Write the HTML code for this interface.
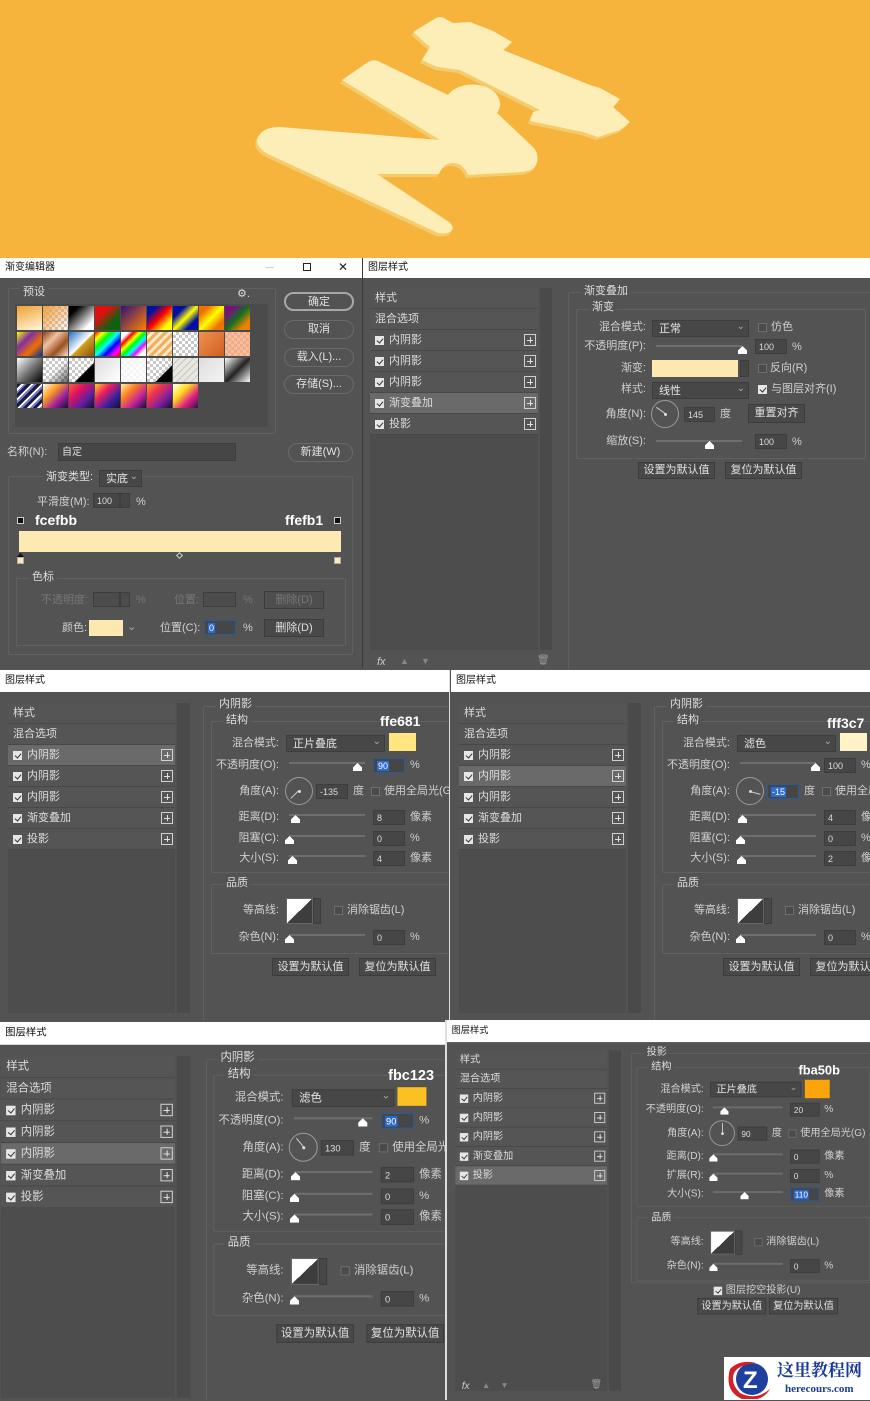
<!DOCTYPE html>
<html><head><meta charset="utf-8"><style>
*{margin:0;padding:0;box-sizing:border-box}
body{width:870px;height:1400px;position:relative;overflow:hidden;background:#535353;font-family:"Liberation Sans","Noto Sans CJK SC",sans-serif;font-size:11px;color:#d4d4d4}
div,i,b,span{position:absolute;white-space:nowrap}
i,b{font-style:normal;font-weight:normal}
.ls{overflow:hidden;background:#535353;transform-origin:0 0}
.tb{left:0;top:0;right:0;height:22px;background:#fff;color:#111;padding:5px 0 0 5px;font-size:10px;line-height:12px}
.list{background:#4d4d4d}
.row{left:0;width:100%;height:21px;background:#555;border-bottom:1px solid #484848}
.row.on{background:#6a6a6a}
.row span{left:19px;top:4px;color:#dcdcdc;line-height:12px}
.row .nm{left:5px}
.row .cb{left:5px;top:6px}
.pl{right:2px;top:4px;width:12px;height:12px;border:1px solid #d0d0d0}
.pl:before{content:"";position:absolute;left:2px;top:4.5px;width:6px;height:1px;background:#e0e0e0}
.pl:after{content:"";position:absolute;left:4.5px;top:2px;width:1px;height:6px;background:#e0e0e0}
.cb{width:9px;height:9px;border:1px solid #6e6e6e;background:#4a4a4a}
.cb.k{background:#e6e6e6;border-color:#e6e6e6}
.cb.k:after{content:"";position:absolute;left:2px;top:0;width:3px;height:5px;border:solid #333;border-width:0 1.5px 1.5px 0;transform:rotate(40deg)}
.gb{border:1px solid #606060;border-radius:2px}
.gl{background:#535353;padding:0 3px;color:#dedede;line-height:12px}
.lb{text-align:right;line-height:12px;color:#d0d0d0}
.dd{height:17px;background:#474747;border:1px solid #3d3d3d;padding:2px 0 0 6px;color:#e4e4e4;line-height:12px}
.dd:after{content:"⌄";position:absolute;right:3px;top:0;font-size:10px;color:#aaa}
.in{height:15px;background:#464646;border:1px solid #3d3d3d;padding:1px 0 0 3px;font-size:9px;color:#ddd;line-height:12px}
.hl{position:static;background:#2b6bd6;color:#fff;padding:0 1px}
.u{line-height:12px;color:#d0d0d0}
.tr{height:2px;background:#6e6e6e}
.th{width:9px;height:8px;background:#fff;clip-path:polygon(50% 0,100% 55%,100% 100%,0 100%,0 55%)}
.dial{width:28px;height:28px;border:1px solid #9a9a9a;border-radius:50%}
.dial i{left:13px;top:13px;width:11px;height:1px;background:#ccc;transform-origin:0 0}
.dial b{left:12px;top:12px;width:3px;height:3px;background:#ddd;border-radius:50%}
.bt{height:18px;background:#494949;border:1px solid #3c3c3c;text-align:center;line-height:16px;color:#e0e0e0}
.hx{font-size:14px;font-weight:bold;color:#fff;line-height:16px}
.ct{width:27px;height:26px;background:linear-gradient(to bottom right,#fff 50%,#3d3d3d 50%);border:1px solid #666}
.cs{width:8px;height:26px;background:#474747;border:1px solid #3d3d3d}
.pb{height:19px;border:1px solid #8c8c8c;border-radius:10px;text-align:center;line-height:17px;color:#e0e0e0}
.sq{width:25px;height:24px}
.ck{background:repeating-conic-gradient(#c8c8c8 0 25%,#fff 0 50%) 0 0/6px 6px}
.scr{background:#4a4a4a}
</style></head><body>

<!-- banner -->
<svg style="position:absolute;left:0;top:0" width="870" height="258" viewBox="0 0 870 258">
<rect width="870" height="258" fill="#f6b43c"/>
<g transform="translate(-2,3)" fill="#f5cc6c">
<path d="M342 80 L368 62 Q373 59 378 61 L448 95 A24 17 0 0 1 497 113 L533 147 Q541 156 535 167 Q531 171 522 172 L468 175 Q463 163 453 163 Q443 163 439 174 L377 174 L449 222 Q456 228 450 232 Q446 234 438 233 L268 154 Q254 146 258 137 Q263 127 280 127 L440 140 Z"/>
<path d="M413 32 L436 18 Q440 16 444 18 L453 23 L470 22 L493 31 L512 42 L503 50 L590 85 L600 88 L620 99 L613 107 L630 122 L620 130 L598 137 L583 132 L530 121 L533 112 L540 110 L460 70 L437 67 L422 60 L430 47 Z"/>
</g>
<g fill="#fdedb6">
<path d="M342 80 L368 62 Q373 59 378 61 L448 95 A24 17 0 0 1 497 113 L533 147 Q541 156 535 167 Q531 171 522 172 L468 175 Q463 163 453 163 Q443 163 439 174 L377 174 L449 222 Q456 228 450 232 Q446 234 438 233 L268 154 Q254 146 258 137 Q263 127 280 127 L440 140 Z"/>
<path d="M413 32 L436 18 Q440 16 444 18 L453 23 L470 22 L493 31 L512 42 L503 50 L590 85 L600 88 L620 99 L613 107 L630 122 L620 130 L598 137 L583 132 L530 121 L533 112 L540 110 L460 70 L437 67 L422 60 L430 47 Z"/>
</g>
</svg>

<!-- Gradient editor -->
<div class="ls" style="left:0;top:258px;width:362px;height:410px">
<div class="tb" style="height:20px;padding-top:4px">渐变编辑器</div>
<div style="left:266px;top:9px;width:8px;height:1px;background:#ccc"></div>
<div style="left:303px;top:5px;width:8px;height:8px;border:1px solid #222"></div>
<div style="left:338px;top:2px;color:#222;font-size:12px">✕</div>
<div class="gb" style="left:8px;top:30px;width:268px;height:146px"></div>
<div class="gl" style="left:20px;top:28px">预设</div>
<div style="left:237px;top:29px;color:#ddd;font-size:11px">⚙.</div>
<div class="scr" style="left:15px;top:46px;width:253px;height:123px;background:#4b4b4b"></div>
<div style="left:15px;top:46px;width:253px;height:123px">
<i class="sq" style="left:2px;top:2px;background:linear-gradient(160deg,#f0a030,#fff8e0)"></i>
<i class="sq ck" style="left:28px;top:2px"></i><i class="sq" style="left:28px;top:2px;background:linear-gradient(135deg,#f0a040,rgba(255,255,255,0))"></i>
<i class="sq" style="left:54px;top:2px;background:linear-gradient(135deg,#000 20%,#fff 80%)"></i>
<i class="sq" style="left:80px;top:2px;background:linear-gradient(135deg,#e01010 30%,#106010 70%)"></i>
<i class="sq" style="left:106px;top:2px;background:linear-gradient(135deg,#30107a,#ff8000)"></i>
<i class="sq" style="left:132px;top:2px;background:linear-gradient(135deg,#0010a0 20%,#f00 50%,#ff0 80%)"></i>
<i class="sq" style="left:158px;top:2px;background:linear-gradient(135deg,#0010a0 25%,#ff0 50%,#0010a0 75%)"></i>
<i class="sq" style="left:184px;top:2px;background:linear-gradient(135deg,#f07000 20%,#ff0 50%,#f07000 80%)"></i>
<i class="sq" style="left:210px;top:2px;background:linear-gradient(135deg,#7a1080 20%,#107020 50%,#f08000 80%)"></i>
<i class="sq" style="left:2px;top:28px;background:linear-gradient(135deg,#ff0,#8030a0,#f07000,#0030a0)"></i>
<i class="sq" style="left:28px;top:28px;background:linear-gradient(135deg,#8a4010,#f0c0a0,#9a5020,#fde0d0)"></i>
<i class="sq" style="left:54px;top:28px;background:linear-gradient(135deg,#2070c0,#fff 50%,#d0a020 55%,#8a5010)"></i>
<i class="sq" style="left:80px;top:28px;background:linear-gradient(135deg,#f00,#ff0,#0f0,#0ff,#00f,#f0f,#f00)"></i>
<i class="sq" style="left:106px;top:28px;background:linear-gradient(135deg,#fff 15%,#f00,#ff0,#0f0,#0ff,#f0f,#fff 85%)"></i>
<i class="sq" style="left:132px;top:28px;background:repeating-linear-gradient(135deg,#f0b060 0 3px,#fde8c8 3px 6px)"></i>
<i class="sq ck" style="left:158px;top:28px;background-color:#aaa"></i>
<i class="sq" style="left:184px;top:28px;background:linear-gradient(135deg,#f09050,#d06020)"></i>
<i class="sq ck" style="left:210px;top:28px"></i><i class="sq" style="left:210px;top:28px;background:rgba(250,160,110,.7)"></i>
<i class="sq" style="left:2px;top:54px;background:linear-gradient(135deg,#fff,#777,#000)"></i>
<i class="sq ck" style="left:28px;top:54px"></i><i class="sq" style="left:28px;top:54px;background:linear-gradient(135deg,rgba(0,0,0,0) 50%,rgba(0,0,0,.6))"></i>
<i class="sq ck" style="left:54px;top:54px"></i><i class="sq" style="left:54px;top:54px;background:linear-gradient(135deg,rgba(0,0,0,0) 60%,#000 62%)"></i>
<i class="sq" style="left:80px;top:54px;background:linear-gradient(135deg,#ddd,#fff)"></i>
<i class="sq ck" style="left:106px;top:54px"></i><i class="sq" style="left:106px;top:54px;background:rgba(255,255,255,.8)"></i>
<i class="sq ck" style="left:132px;top:54px"></i><i class="sq" style="left:132px;top:54px;background:linear-gradient(135deg,rgba(0,0,0,0) 65%,#000 67%)"></i>
<i class="sq" style="left:158px;top:54px;background:repeating-linear-gradient(135deg,#e8e8e0 0 4px,#c8c8c0 4px 5px)"></i>
<i class="sq" style="left:184px;top:54px;background:linear-gradient(135deg,#ddd,#f4f4f4)"></i>
<i class="sq" style="left:210px;top:54px;background:linear-gradient(135deg,#fff,#222 50%,#fff)"></i>
<i class="sq" style="left:2px;top:80px;background:repeating-linear-gradient(135deg,#102040 0 3px,#fff 3px 5px,#8070d0 5px 7px)"></i>
<i class="sq" style="left:28px;top:80px;background:linear-gradient(135deg,#fff,#ffa020,#a020a0,#101030)"></i>
<i class="sq" style="left:54px;top:80px;background:linear-gradient(135deg,#ff6030,#e01060,#6020a0,#101030)"></i>
<i class="sq" style="left:80px;top:80px;background:linear-gradient(135deg,#ffd020,#f02060,#4020a0,#101030)"></i>
<i class="sq" style="left:106px;top:80px;background:linear-gradient(135deg,#fff0a0,#ff8020,#c020a0,#101030)"></i>
<i class="sq" style="left:132px;top:80px;background:linear-gradient(135deg,#ffa020,#f03050,#8020a0,#101030)"></i>
<i class="sq" style="left:158px;top:80px;background:linear-gradient(135deg,#fff,#ffe020,#e02080,#301050)"></i>
</div>
<div class="pb" style="left:284px;top:34px;width:70px;border:2px solid #a8a8a8">确定</div>
<div class="pb" style="left:284px;top:62px;width:70px;border-color:#6a6a6a">取消</div>
<div class="pb" style="left:284px;top:90px;width:70px;border-color:#6a6a6a">载入(L)...</div>
<div class="pb" style="left:284px;top:117px;width:70px;border-color:#6a6a6a">存储(S)...</div>
<div class="u" style="left:7px;top:188px">名称(N):</div>
<div class="in" style="left:58px;top:185px;width:178px;height:18px;font-size:10px;padding-top:3px">自定</div>
<div class="pb" style="left:288px;top:185px;width:65px;border-color:#6a6a6a">新建(W)</div>
<div class="gb" style="left:8px;top:218px;width:345px;height:179px"></div>
<div class="gl" style="left:43px;top:213px">渐变类型:</div>
<div class="dd" style="left:99px;top:212px;width:43px">实底</div>
<div class="u" style="left:37px;top:238px">平滑度(M):</div>
<div class="in" style="left:93px;top:235px;width:27px">100</div>
<div class="in" style="left:120px;top:235px;width:10px"></div>
<div class="u" style="left:136px;top:238px">%</div>
<div style="left:17px;top:259px;width:7px;height:7px;background:#111;border:1px solid #ccc"></div>
<div style="left:334px;top:259px;width:7px;height:7px;background:#111;border:1px solid #ccc"></div>
<div class="hx" style="left:35px;top:254px">fcefbb</div>
<div class="hx" style="left:285px;top:254px">ffefb1</div>
<div style="left:19px;top:273px;width:322px;height:21px;background:#fdeab2"></div>
<div style="left:17px;top:295px;width:7px;height:4px;background:#111;clip-path:polygon(50% 0,100% 100%,0 100%)"></div>
<div style="left:17px;top:299px;width:7px;height:7px;background:#fde9b4;border:1px solid #aaa"></div>
<div style="left:334px;top:299px;width:7px;height:7px;background:#fdeeb0;border:1px solid #aaa"></div>
<div style="left:177px;top:295px;width:5px;height:5px;border:1px solid #ccc;transform:rotate(45deg)"></div>
<div class="gb" style="left:16px;top:320px;width:330px;height:68px"></div>
<div class="gl" style="left:29px;top:313px">色标</div>
<div class="u" style="left:41px;top:336px;color:#777">不透明度:</div>
<div class="in" style="left:93px;top:334px;width:27px;background:#4c4c4c"></div>
<div class="in" style="left:120px;top:334px;width:10px;background:#4c4c4c"></div>
<div class="u" style="left:136px;top:336px;color:#777">%</div>
<div class="u" style="left:174px;top:336px;color:#777">位置:</div>
<div class="in" style="left:203px;top:334px;width:33px;background:#4c4c4c"></div>
<div class="u" style="left:243px;top:336px;color:#777">%</div>
<div class="bt" style="left:264px;top:333px;width:60px;color:#777;background:#4e4e4e">删除(D)</div>
<div class="u" style="left:62px;top:364px">颜色:</div>
<div style="left:89px;top:362px;width:34px;height:16px;background:#fde9b0"></div>
<div class="u" style="left:127px;top:363px;color:#aaa">⌄</div>
<div class="u" style="left:160px;top:364px">位置(C):</div>
<div class="in" style="left:204px;top:362px;width:32px;border-color:#2a5a9a"><b class="hl">0</b></div>
<div class="u" style="left:243px;top:364px">%</div>
<div class="bt" style="left:264px;top:361px;width:60px">删除(D)</div>
</div>
<div style="left:362px;top:258px;width:1px;height:410px;background:#3a3a3a"></div>

<!-- Top layer style -->
<div class="ls" style="left:363px;top:258px;width:507px;height:410px">
<div class="tb" style="height:20px;padding-top:4px">图层样式</div>
<div class="list" style="left:7px;top:30px;width:168px;height:362px">
<div class="row" style="top:0"><span class="nm">样式</span></div>
<div class="row" style="top:21px"><span class="nm">混合选项</span></div>
<div class="row" style="top:42px"><i class="cb k"></i><span>内阴影</span><i class="pl"></i></div>
<div class="row" style="top:63px"><i class="cb k"></i><span>内阴影</span><i class="pl"></i></div>
<div class="row" style="top:84px"><i class="cb k"></i><span>内阴影</span><i class="pl"></i></div>
<div class="row on" style="top:105px"><i class="cb k"></i><span>渐变叠加</span><i class="pl"></i></div>
<div class="row" style="top:126px"><i class="cb k"></i><span>投影</span><i class="pl"></i></div>
</div>
<div class="scr" style="left:177px;top:30px;width:12px;height:362px"></div>
<div style="left:14px;top:398px;font-style:italic;color:#ccc">fx</div>
<div style="left:37px;top:398px;color:#888;font-size:9px">▲</div>
<div style="left:58px;top:398px;color:#888;font-size:9px">▼</div>
<div style="left:174px;top:397px;color:#999;font-size:10px">🗑</div>
<div class="gb" style="left:205px;top:34px;width:310px;height:380px"></div>
<div class="gl" style="left:218px;top:27px">渐变叠加</div>
<div class="gb" style="left:213px;top:51px;width:290px;height:150px"></div>
<div class="gl" style="left:226px;top:43px">渐变</div>
<div class="lb" style="left:183px;width:100px;top:63px">混合模式:</div>
<div class="dd" style="left:289px;top:62px;width:97px">正常</div>
<i class="cb" style="left:395px;top:65px"></i><div class="u" style="left:408px;top:63px">仿色</div>
<div class="lb" style="left:183px;width:100px;top:82px">不透明度(P):</div>
<div class="tr" style="left:293px;top:87px;width:86px"></div><i class="th" style="left:375px;top:88px"></i>
<div class="in" style="left:392px;top:81px;width:32px">100</div><div class="u" style="left:429px;top:83px">%</div>
<div class="lb" style="left:183px;width:100px;top:104px">渐变:</div>
<div style="left:289px;top:102px;width:86px;height:17px;background:#fde9b0"></div>
<div class="in" style="left:377px;top:102px;width:9px;height:17px"></div>
<i class="cb" style="left:395px;top:106px"></i><div class="u" style="left:407px;top:104px">反向(R)</div>
<div class="lb" style="left:183px;width:100px;top:125px">样式:</div>
<div class="dd" style="left:289px;top:124px;width:97px">线性</div>
<i class="cb k" style="left:395px;top:127px"></i><div class="u" style="left:408px;top:125px">与图层对齐(I)</div>
<div class="lb" style="left:183px;width:100px;top:150px">角度(N):</div>
<div class="dial" style="left:288px;top:142px"><i style="transform:rotate(-145deg)"></i><b></b></div>
<div class="in" style="left:321px;top:149px;width:31px">145</div><div class="u" style="left:357px;top:150px">度</div>
<div class="bt" style="left:385px;top:146px;width:57px;height:19px">重置对齐</div>
<div class="lb" style="left:183px;width:100px;top:177px">缩放(S):</div>
<div class="tr" style="left:293px;top:182px;width:86px"></div><i class="th" style="left:342px;top:183px"></i>
<div class="in" style="left:392px;top:176px;width:32px">100</div><div class="u" style="left:429px;top:178px">%</div>
<div class="bt" style="left:275px;top:204px;width:77px;height:17px;line-height:15px">设置为默认值</div>
<div class="bt" style="left:362px;top:204px;width:77px;height:17px;line-height:15px">复位为默认值</div>
</div>

<!-- Section 2 left -->
<div class="ls" style="left:0;top:670px;width:450px;height:350px;border-right:1px solid #ddd">
<div class="tb">图层样式</div>
<div class="list" style="left:8px;top:33px;width:167px;height:310px">
<div class="row" style="top:0"><span class="nm">样式</span></div>
<div class="row" style="top:21px"><span class="nm">混合选项</span></div>
<div class="row on" style="top:42px"><i class="cb k"></i><span>内阴影</span><i class="pl"></i></div>
<div class="row" style="top:63px"><i class="cb k"></i><span>内阴影</span><i class="pl"></i></div>
<div class="row" style="top:84px"><i class="cb k"></i><span>内阴影</span><i class="pl"></i></div>
<div class="row" style="top:105px"><i class="cb k"></i><span>渐变叠加</span><i class="pl"></i></div>
<div class="row" style="top:126px"><i class="cb k"></i><span>投影</span><i class="pl"></i></div>
</div>
<div class="scr" style="left:177px;top:33px;width:13px;height:310px"></div>
<div class="gb" style="left:203px;top:36px;width:262px;height:330px"></div>
<div class="gl" style="left:216px;top:28px">内阴影</div>
<div class="gb" style="left:211px;top:51px;width:254px;height:152px"></div>
<div class="gl" style="left:223px;top:44px">结构</div>
<div class="hx" style="left:380px;top:43px">ffe681</div>
<div class="lb" style="left:180px;width:99px;top:67px">混合模式:</div>
<div class="dd" style="left:286px;top:65px;width:99px">正片叠底</div>
<div style="left:389px;top:63px;width:27px;height:18px;background:#ffe681"></div>
<div class="lb" style="left:180px;width:99px;top:89px">不透明度(O):</div>
<div class="tr" style="left:289px;top:92px;width:76px"></div><i class="th" style="left:353px;top:93px"></i>
<div class="in" style="left:373px;top:88px;width:32px;border-color:#2a5a9a"><b class="hl">90</b></div><div class="u" style="left:410px;top:89px">%</div>
<div class="lb" style="left:180px;width:99px;top:115px">角度(A):</div>
<div class="dial" style="left:285px;top:107px"><i style="transform:rotate(135deg)"></i><b></b></div>
<div class="in" style="left:316px;top:114px;width:32px">-135</div><div class="u" style="left:353px;top:115px">度</div>
<i class="cb" style="left:371px;top:117px"></i><div class="u" style="left:384px;top:115px">使用全局光(G)</div>
<div class="lb" style="left:180px;width:99px;top:141px">距离(D):</div>
<div class="tr" style="left:289px;top:144px;width:76px"></div><i class="th" style="left:291px;top:145px"></i>
<div class="in" style="left:373px;top:140px;width:32px">8</div><div class="u" style="left:410px;top:141px">像素</div>
<div class="lb" style="left:180px;width:99px;top:162px">阻塞(C):</div>
<div class="tr" style="left:289px;top:165px;width:76px"></div><i class="th" style="left:285px;top:166px"></i>
<div class="in" style="left:373px;top:161px;width:32px">0</div><div class="u" style="left:410px;top:162px">%</div>
<div class="lb" style="left:180px;width:99px;top:182px">大小(S):</div>
<div class="tr" style="left:289px;top:185px;width:76px"></div><i class="th" style="left:288px;top:186px"></i>
<div class="in" style="left:373px;top:181px;width:32px">4</div><div class="u" style="left:410px;top:182px">像素</div>
<div class="gb" style="left:211px;top:214px;width:254px;height:70px"></div>
<div class="gl" style="left:223px;top:207px">品质</div>
<div class="lb" style="left:180px;width:99px;top:234px">等高线:</div>
<div class="ct" style="left:286px;top:228px"></div><div class="cs" style="left:313px;top:228px"></div>
<i class="cb" style="left:334px;top:236px"></i><div class="u" style="left:347px;top:234px">消除锯齿(L)</div>
<div class="lb" style="left:180px;width:99px;top:261px">杂色(N):</div>
<div class="tr" style="left:289px;top:264px;width:76px"></div><i class="th" style="left:285px;top:265px"></i>
<div class="in" style="left:373px;top:260px;width:32px">0</div><div class="u" style="left:410px;top:261px">%</div>
<div class="bt" style="left:272px;top:288px;width:77px">设置为默认值</div>
<div class="bt" style="left:359px;top:288px;width:77px">复位为默认值</div>
</div>

<!-- Section 2 right -->
<div class="ls" style="left:451px;top:670px;width:419px;height:350px">
<div class="tb">图层样式</div>
<div class="list" style="left:8px;top:33px;width:167px;height:310px">
<div class="row" style="top:0"><span class="nm">样式</span></div>
<div class="row" style="top:21px"><span class="nm">混合选项</span></div>
<div class="row" style="top:42px"><i class="cb k"></i><span>内阴影</span><i class="pl"></i></div>
<div class="row on" style="top:63px"><i class="cb k"></i><span>内阴影</span><i class="pl"></i></div>
<div class="row" style="top:84px"><i class="cb k"></i><span>内阴影</span><i class="pl"></i></div>
<div class="row" style="top:105px"><i class="cb k"></i><span>渐变叠加</span><i class="pl"></i></div>
<div class="row" style="top:126px"><i class="cb k"></i><span>投影</span><i class="pl"></i></div>
</div>
<div class="scr" style="left:177px;top:33px;width:13px;height:310px"></div>
<div class="gb" style="left:203px;top:36px;width:262px;height:330px"></div>
<div class="gl" style="left:216px;top:28px">内阴影</div>
<div class="gb" style="left:211px;top:51px;width:254px;height:152px"></div>
<div class="gl" style="left:223px;top:44px">结构</div>
<div class="hx" style="left:376px;top:45px">fff3c7</div>
<div class="lb" style="left:180px;width:99px;top:67px">混合模式:</div>
<div class="dd" style="left:286px;top:65px;width:99px">滤色</div>
<div style="left:389px;top:63px;width:27px;height:18px;background:#fff3c7"></div>
<div class="lb" style="left:180px;width:99px;top:89px">不透明度(O):</div>
<div class="tr" style="left:289px;top:92px;width:76px"></div><i class="th" style="left:360px;top:93px"></i>
<div class="in" style="left:373px;top:88px;width:32px">100</div><div class="u" style="left:410px;top:89px">%</div>
<div class="lb" style="left:180px;width:99px;top:115px">角度(A):</div>
<div class="dial" style="left:285px;top:107px"><i style="transform:rotate(15deg)"></i><b></b></div>
<div class="in" style="left:316px;top:114px;width:32px;border-color:#2a5a9a"><b class="hl">-15</b></div><div class="u" style="left:353px;top:115px">度</div>
<i class="cb" style="left:371px;top:117px"></i><div class="u" style="left:384px;top:115px">使用全局光(G)</div>
<div class="lb" style="left:180px;width:99px;top:141px">距离(D):</div>
<div class="tr" style="left:289px;top:144px;width:76px"></div><i class="th" style="left:287px;top:145px"></i>
<div class="in" style="left:373px;top:140px;width:32px">4</div><div class="u" style="left:410px;top:141px">像素</div>
<div class="lb" style="left:180px;width:99px;top:162px">阻塞(C):</div>
<div class="tr" style="left:289px;top:165px;width:76px"></div><i class="th" style="left:285px;top:166px"></i>
<div class="in" style="left:373px;top:161px;width:32px">0</div><div class="u" style="left:410px;top:162px">%</div>
<div class="lb" style="left:180px;width:99px;top:182px">大小(S):</div>
<div class="tr" style="left:289px;top:185px;width:76px"></div><i class="th" style="left:286px;top:186px"></i>
<div class="in" style="left:373px;top:181px;width:32px">2</div><div class="u" style="left:410px;top:182px">像素</div>
<div class="gb" style="left:211px;top:214px;width:254px;height:70px"></div>
<div class="gl" style="left:223px;top:207px">品质</div>
<div class="lb" style="left:180px;width:99px;top:234px">等高线:</div>
<div class="ct" style="left:286px;top:228px"></div><div class="cs" style="left:313px;top:228px"></div>
<i class="cb" style="left:334px;top:236px"></i><div class="u" style="left:347px;top:234px">消除锯齿(L)</div>
<div class="lb" style="left:180px;width:99px;top:261px">杂色(N):</div>
<div class="tr" style="left:289px;top:264px;width:76px"></div><i class="th" style="left:285px;top:265px"></i>
<div class="in" style="left:373px;top:260px;width:32px">0</div><div class="u" style="left:410px;top:261px">%</div>
<div class="bt" style="left:272px;top:288px;width:77px">设置为默认值</div>
<div class="bt" style="left:359px;top:288px;width:77px">复位为默认值</div>
</div>

<!-- Section 3 left (scaled) -->
<div class="ls" style="left:0;top:1022px;width:430px;height:365px;transform:scale(1.035)">
<div class="tb">图层样式</div>
<div class="list" style="left:1px;top:33px;width:168px;height:330px">
<div class="row" style="top:0"><span class="nm">样式</span></div>
<div class="row" style="top:21px"><span class="nm">混合选项</span></div>
<div class="row" style="top:42px"><i class="cb k"></i><span>内阴影</span><i class="pl"></i></div>
<div class="row" style="top:63px"><i class="cb k"></i><span>内阴影</span><i class="pl"></i></div>
<div class="row on" style="top:84px"><i class="cb k"></i><span>内阴影</span><i class="pl"></i></div>
<div class="row" style="top:105px"><i class="cb k"></i><span>渐变叠加</span><i class="pl"></i></div>
<div class="row" style="top:126px"><i class="cb k"></i><span>投影</span><i class="pl"></i></div>
</div>
<div class="scr" style="left:171px;top:33px;width:13px;height:330px"></div>
<div class="gb" style="left:199px;top:36px;width:262px;height:340px"></div>
<div class="gl" style="left:210px;top:28px">内阴影</div>
<div class="gb" style="left:206px;top:51px;width:254px;height:152px"></div>
<div class="gl" style="left:217px;top:44px">结构</div>
<div class="hx" style="left:375px;top:43px">fbc123</div>
<div class="lb" style="left:175px;width:99px;top:67px">混合模式:</div>
<div class="dd" style="left:282px;top:65px;width:99px">滤色</div>
<div style="left:384px;top:63px;width:28px;height:18px;background:#fbc123"></div>
<div class="lb" style="left:175px;width:99px;top:89px">不透明度(O):</div>
<div class="tr" style="left:284px;top:92px;width:76px"></div><i class="th" style="left:346px;top:93px"></i>
<div class="in" style="left:368px;top:88px;width:32px;border-color:#2a5a9a"><b class="hl">90</b></div><div class="u" style="left:405px;top:89px">%</div>
<div class="lb" style="left:175px;width:99px;top:115px">角度(A):</div>
<div class="dial" style="left:279px;top:107px"><i style="transform:rotate(-130deg)"></i><b></b></div>
<div class="in" style="left:310px;top:114px;width:32px">130</div><div class="u" style="left:347px;top:115px">度</div>
<i class="cb" style="left:366px;top:117px"></i><div class="u" style="left:379px;top:115px">使用全局光</div>
<div class="lb" style="left:175px;width:99px;top:141px">距离(D):</div>
<div class="tr" style="left:284px;top:144px;width:76px"></div><i class="th" style="left:281px;top:145px"></i>
<div class="in" style="left:368px;top:140px;width:32px">2</div><div class="u" style="left:405px;top:141px">像素</div>
<div class="lb" style="left:175px;width:99px;top:162px">阻塞(C):</div>
<div class="tr" style="left:284px;top:165px;width:76px"></div><i class="th" style="left:280px;top:166px"></i>
<div class="in" style="left:368px;top:161px;width:32px">0</div><div class="u" style="left:405px;top:162px">%</div>
<div class="lb" style="left:175px;width:99px;top:182px">大小(S):</div>
<div class="tr" style="left:284px;top:185px;width:76px"></div><i class="th" style="left:280px;top:186px"></i>
<div class="in" style="left:368px;top:181px;width:32px">0</div><div class="u" style="left:405px;top:182px">像素</div>
<div class="gb" style="left:206px;top:214px;width:254px;height:70px"></div>
<div class="gl" style="left:217px;top:207px">品质</div>
<div class="lb" style="left:175px;width:99px;top:234px">等高线:</div>
<div class="ct" style="left:281px;top:228px"></div><div class="cs" style="left:308px;top:228px"></div>
<i class="cb" style="left:329px;top:236px"></i><div class="u" style="left:342px;top:234px">消除锯齿(L)</div>
<div class="lb" style="left:175px;width:99px;top:261px">杂色(N):</div>
<div class="tr" style="left:284px;top:264px;width:76px"></div><i class="th" style="left:280px;top:265px"></i>
<div class="in" style="left:368px;top:260px;width:32px">0</div><div class="u" style="left:405px;top:261px">%</div>
<div class="bt" style="left:267px;top:292px;width:75px">设置为默认值</div>
<div class="bt" style="left:354px;top:292px;width:75px">复位为默认值</div>
</div>
<div style="left:445px;top:1020px;width:2px;height:380px;background:#ddd"></div>

<!-- Section 3 right (scaled) -->
<div class="ls" style="left:447px;top:1020px;width:460px;height:414px;transform:scale(0.92)">
<div class="tb" style="height:24px;padding-top:6px">图层样式</div>
<div class="list" style="left:9px;top:33px;width:165px;height:370px">
<div class="row" style="top:0"><span class="nm">样式</span></div>
<div class="row" style="top:21px"><span class="nm">混合选项</span></div>
<div class="row" style="top:42px"><i class="cb k"></i><span>内阴影</span><i class="pl"></i></div>
<div class="row" style="top:63px"><i class="cb k"></i><span>内阴影</span><i class="pl"></i></div>
<div class="row" style="top:84px"><i class="cb k"></i><span>内阴影</span><i class="pl"></i></div>
<div class="row" style="top:105px"><i class="cb k"></i><span>渐变叠加</span><i class="pl"></i></div>
<div class="row on" style="top:126px"><i class="cb k"></i><span>投影</span><i class="pl"></i></div>
</div>
<div class="scr" style="left:176px;top:33px;width:13px;height:370px"></div>
<div style="left:16px;top:392px;font-style:italic;color:#ccc">fx</div>
<div style="left:38px;top:392px;color:#888;font-size:9px">▲</div>
<div style="left:58px;top:392px;color:#888;font-size:9px">▼</div>
<div style="left:156px;top:391px;color:#999;font-size:10px">🗑</div>
<div class="gb" style="left:200px;top:36px;width:262px;height:250px"></div>
<div class="gl" style="left:214px;top:29px">投影</div>
<div class="gb" style="left:206px;top:51px;width:254px;height:152px"></div>
<div class="gl" style="left:219px;top:45px">结构</div>
<div class="hx" style="left:382px;top:46px">fba50b</div>
<div class="lb" style="left:180px;width:99px;top:69px">混合模式:</div>
<div class="dd" style="left:286px;top:67px;width:99px">正片叠底</div>
<div style="left:389px;top:65px;width:27px;height:20px;background:#fba50b"></div>
<div class="lb" style="left:180px;width:99px;top:91px">不透明度(O):</div>
<div class="tr" style="left:289px;top:94px;width:76px"></div><i class="th" style="left:297px;top:95px"></i>
<div class="in" style="left:373px;top:90px;width:32px">20</div><div class="u" style="left:410px;top:91px">%</div>
<div class="lb" style="left:180px;width:99px;top:117px">角度(A):</div>
<div class="dial" style="left:285px;top:109px"><i style="transform:rotate(-90deg)"></i><b></b></div>
<div class="in" style="left:316px;top:116px;width:32px">90</div><div class="u" style="left:353px;top:117px">度</div>
<i class="cb" style="left:371px;top:119px"></i><div class="u" style="left:384px;top:117px">使用全局光(G)</div>
<div class="lb" style="left:180px;width:99px;top:142px">距离(D):</div>
<div class="tr" style="left:289px;top:145px;width:76px"></div><i class="th" style="left:285px;top:146px"></i>
<div class="in" style="left:373px;top:141px;width:32px">0</div><div class="u" style="left:410px;top:142px">像素</div>
<div class="lb" style="left:180px;width:99px;top:163px">扩展(R):</div>
<div class="tr" style="left:289px;top:166px;width:76px"></div><i class="th" style="left:285px;top:167px"></i>
<div class="in" style="left:373px;top:162px;width:32px">0</div><div class="u" style="left:410px;top:163px">%</div>
<div class="lb" style="left:180px;width:99px;top:183px">大小(S):</div>
<div class="tr" style="left:289px;top:186px;width:76px"></div><i class="th" style="left:319px;top:187px"></i>
<div class="in" style="left:373px;top:182px;width:32px;border-color:#2a5a9a"><b class="hl">110</b></div><div class="u" style="left:410px;top:183px">像素</div>
<div class="gb" style="left:206px;top:214px;width:254px;height:70px"></div>
<div class="gl" style="left:219px;top:209px">品质</div>
<div class="lb" style="left:180px;width:99px;top:235px">等高线:</div>
<div class="ct" style="left:286px;top:229px"></div><div class="cs" style="left:313px;top:229px"></div>
<i class="cb" style="left:334px;top:237px"></i><div class="u" style="left:347px;top:235px">消除锯齿(L)</div>
<div class="lb" style="left:180px;width:99px;top:261px">杂色(N):</div>
<div class="tr" style="left:289px;top:264px;width:76px"></div><i class="th" style="left:285px;top:265px"></i>
<div class="in" style="left:373px;top:260px;width:32px">0</div><div class="u" style="left:410px;top:261px">%</div>
<i class="cb k" style="left:290px;top:290px"></i><div class="u" style="left:303px;top:288px">图层挖空投影(U)</div>
<div class="bt" style="left:272px;top:302px;width:75px">设置为默认值</div>
<div class="bt" style="left:350px;top:302px;width:75px">复位为默认值</div>
</div>

<!-- logo -->
<div style="left:724px;top:1357px;width:146px;height:43px;background:#fff">
<svg style="position:absolute;left:2px;top:2px" width="48" height="40" viewBox="0 0 48 40">
<circle cx="26" cy="20" r="16" fill="#1f3f9e"/>
<path d="M4 10 Q14 0 30 4 Q12 6 8 14 Q4 24 14 34 Q30 42 44 30 Q36 44 16 40 Q-2 32 4 10Z" fill="#d41f26"/>
<text x="17" y="29" font-family="Liberation Sans,sans-serif" font-weight="bold" font-size="24" fill="#fff">Z</text>
</svg>
<div style="left:53px;top:2px;font:bold 17px 'Noto Serif CJK SC','Noto Sans CJK SC',serif;color:#1a3a9a;line-height:20px">这里教程网</div>
<div style="left:61px;top:25px;font:bold 11px 'Liberation Serif',serif;color:#1a3a9a;line-height:14px">herecours.com</div>
</div>
</body></html>
